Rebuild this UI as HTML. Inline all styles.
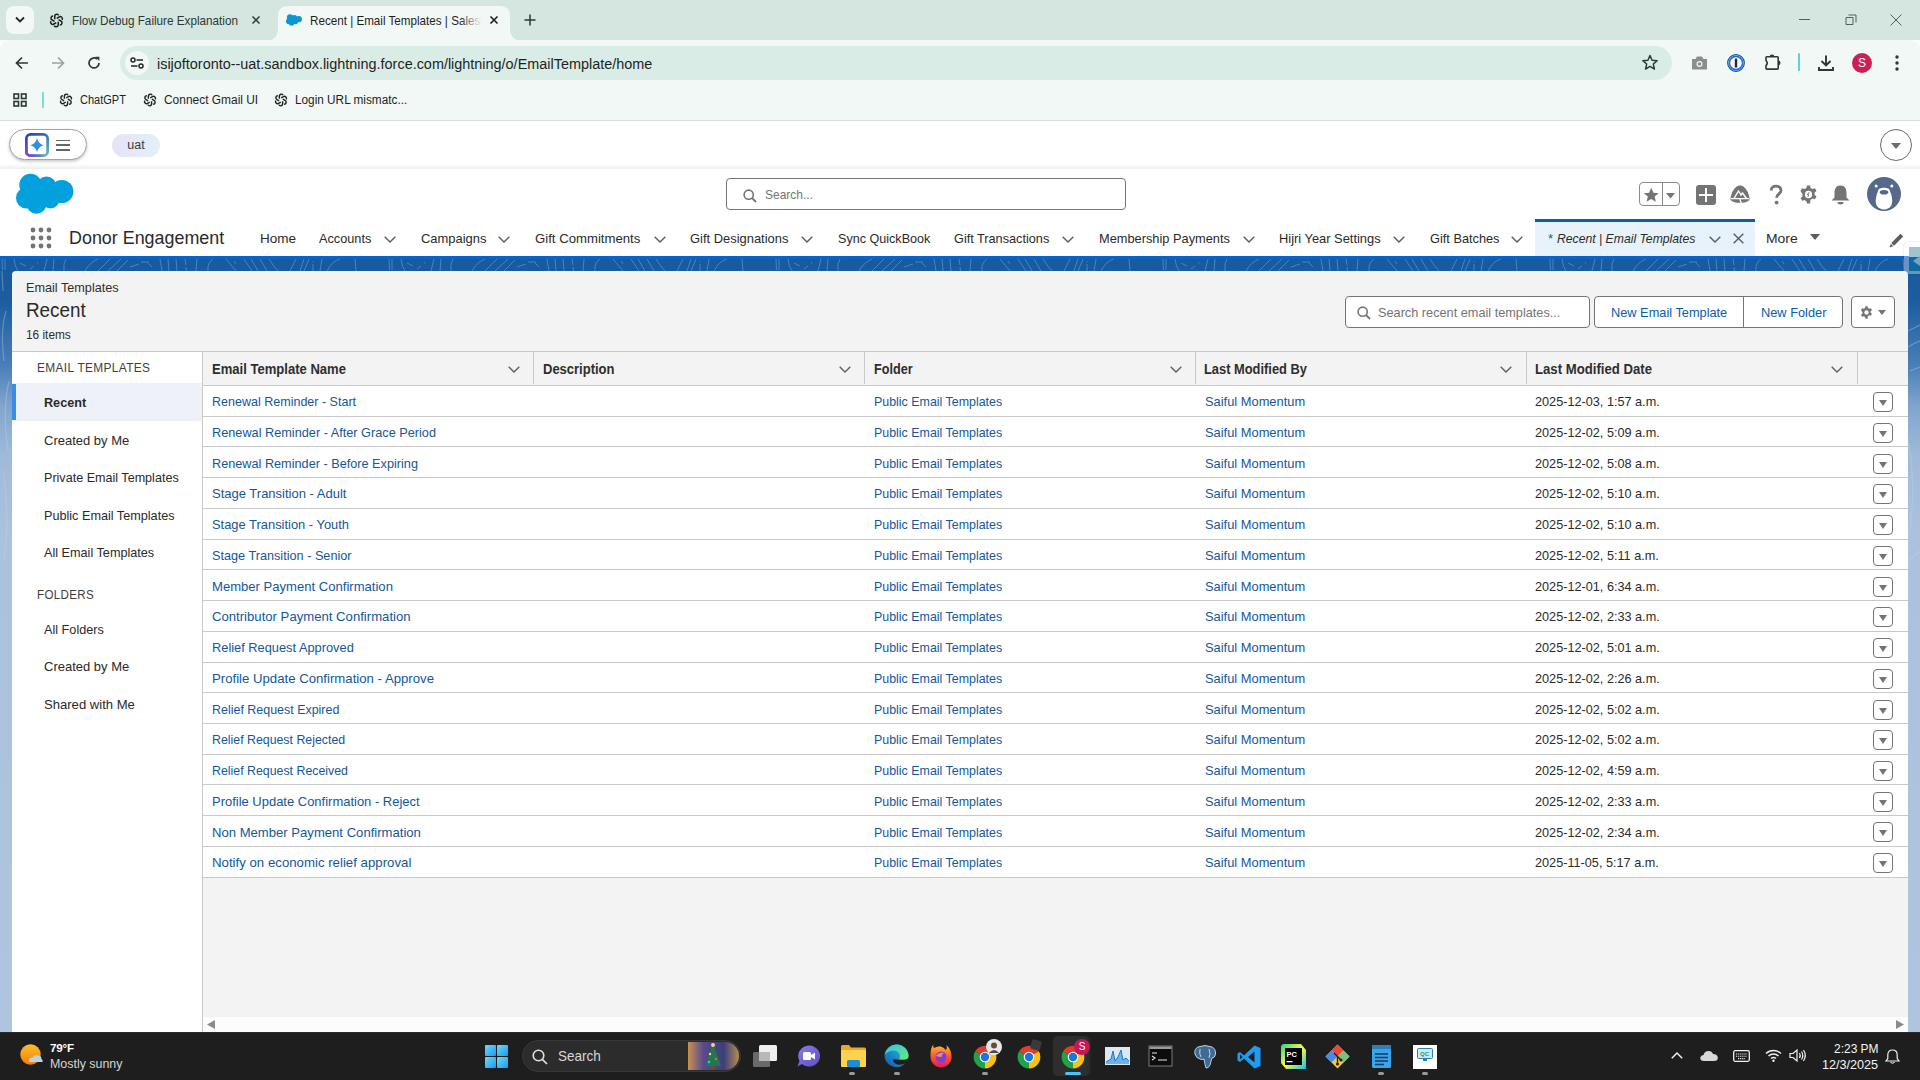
<!DOCTYPE html>
<html><head><meta charset="utf-8">
<style>
*{box-sizing:border-box}
html,body{margin:0;padding:0}
body{width:1920px;height:1080px;overflow:hidden;position:relative;font-family:"Liberation Sans",sans-serif;background:#fff;color:#181818}
.a{position:absolute}
.t{position:absolute;white-space:nowrap;line-height:1}
svg{position:absolute;overflow:visible}
</style></head><body>


<!-- ============ CHROME TAB STRIP ============ -->
<div class="a" style="left:0;top:0;width:1920px;height:40px;background:#d5e6e0"></div>
<div class="a" style="left:6px;top:6px;width:28px;height:28px;border-radius:8px;background:#f1f8f5"></div>
<svg style="left:15px;top:16px" width="10" height="8" viewBox="0 0 10 8"><path d="M1 1.5 L5 5.5 L9 1.5" fill="none" stroke="#1f2a26" stroke-width="1.8"/></svg>
<!-- inactive tab -->
<svg style="left:49px;top:13px" width="15" height="15" viewBox="0 0 24 24"><g fill="none" stroke="#1e2421" stroke-width="2.5"><path id="oa1" d="M9.2 9.9 V5.6 A3.4 3.4 0 0 1 15.6 3.8"/><use href="#oa1" transform="rotate(60 12 12)"/><use href="#oa1" transform="rotate(120 12 12)"/><use href="#oa1" transform="rotate(180 12 12)"/><use href="#oa1" transform="rotate(240 12 12)"/><use href="#oa1" transform="rotate(300 12 12)"/></g></svg>
<div class="t" style="left:72px;top:15px;font-size:12.4px;color:#2b3833;transform-origin:0 0;transform:scaleX(0.9448)">Flow Debug Failure Explanation</div>
<svg style="left:252px;top:16px" width="8" height="8" viewBox="0 0 8 8"><path d="M0.5 0.5 L7.5 7.5 M7.5 0.5 L0.5 7.5" stroke="#2b3833" stroke-width="1.5"/></svg>
<!-- active tab -->
<svg style="left:0;top:0" width="1920" height="41" viewBox="0 0 1920 41"><path d="M265 41 Q278 41 278 28 L278 16 Q278 6 288 6 L500 6 Q510 6 510 16 L510 28 Q510 41 523 41 Z" fill="#f1f8f5"/></svg>
<svg style="left:286px;top:14px" width="16" height="12" viewBox="16 173 58 42" preserveAspectRatio="none"><g fill="#0898d6"><circle cx="30.5" cy="185" r="11.2"/><circle cx="46.5" cy="186.5" r="10"/><circle cx="62.5" cy="191" r="11"/><circle cx="26.5" cy="198" r="10.5"/><circle cx="36.5" cy="203.5" r="10.2"/><circle cx="50.5" cy="199.5" r="9"/><rect x="28" y="186" width="34" height="14"/></g></svg>
<div class="a" style="left:310px;top:6px;width:172px;height:30px;overflow:hidden">
<div class="t" style="left:0;top:9px;font-size:12.4px;color:#1f1f1f;transform-origin:0 0;transform:scaleX(0.94)">Recent | Email Templates | Salesforce</div>
<div class="a" style="right:0;top:0;width:22px;height:30px;background:linear-gradient(90deg,rgba(241,248,245,0),#f1f8f5)"></div>
</div>
<svg style="left:490px;top:16px" width="8" height="8" viewBox="0 0 8 8"><path d="M0.5 0.5 L7.5 7.5 M7.5 0.5 L0.5 7.5" stroke="#1f1f1f" stroke-width="1.6"/></svg>
<svg style="left:524px;top:14px" width="12" height="12" viewBox="0 0 12 12"><path d="M6 0.5 V11.5 M0.5 6 H11.5" stroke="#2b3833" stroke-width="1.5"/></svg>
<!-- window controls -->
<div class="a" style="left:1799px;top:19px;width:11px;height:1px;background:#55605c"></div>
<svg style="left:1845px;top:14px" width="12" height="12" viewBox="0 0 12 12"><path d="M1 3.5 h7 v7 h-7 z M3.5 1 h7.5 v7.5" fill="none" stroke="#55605c" stroke-width="1"/></svg>
<svg style="left:1890px;top:14px" width="12" height="12" viewBox="0 0 12 12"><path d="M0.5 0.5 L11.5 11.5 M11.5 0.5 L0.5 11.5" stroke="#55605c" stroke-width="1"/></svg>

<!-- ============ TOOLBAR ============ -->
<div class="a" style="left:0;top:40px;width:1920px;height:80px;background:#f1f8f5;border-radius:9px 9px 0 0"></div>
<div class="a" style="left:0;top:120px;width:1920px;height:1px;background:#d7e0dc"></div>
<svg style="left:15px;top:56px" width="14" height="14" viewBox="0 0 14 14"><path d="M13 7 H2 M7 1.5 L1.5 7 L7 12.5" fill="none" stroke="#2b3833" stroke-width="1.7"/></svg>
<svg style="left:51px;top:56px" width="14" height="14" viewBox="0 0 14 14"><path d="M1 7 H12 M7 1.5 L12.5 7 L7 12.5" fill="none" stroke="#9aa3a0" stroke-width="1.7"/></svg>
<svg style="left:87px;top:56px" width="14" height="14" viewBox="0 0 14 14"><path d="M12 7 A5 5 0 1 1 10.3 3.2" fill="none" stroke="#2b3833" stroke-width="1.7"/><path d="M8.2 0.8 H12.4 V5 Z" fill="#2b3833"/></svg>
<div class="a" style="left:120px;top:46px;width:1552px;height:34px;border-radius:17px;background:#d9ede6"></div>
<div class="a" style="left:125px;top:51px;width:24px;height:24px;border-radius:12px;background:#f1f8f5"></div>
<svg style="left:130px;top:57px" width="14" height="12" viewBox="0 0 14 12"><g fill="none" stroke="#1f2a26" stroke-width="1.5"><circle cx="3" cy="3" r="2"/><path d="M6.5 3 H13"/><circle cx="11" cy="9" r="2"/><path d="M1 9 H7.5"/></g></svg>
<div class="t" style="left:157px;top:56.5px;font-size:14.35px;color:#1f1f1f;transform-origin:0 0;transform:scaleX(1.0051)">isijoftoronto--uat.sandbox.lightning.force.com/lightning/o/EmailTemplate/home</div>
<svg style="left:1641px;top:54px" width="18" height="17" viewBox="0 0 24 23"><path d="M12 2 L14.8 8.4 L21.7 9 L16.5 13.6 L18 20.4 L12 16.8 L6 20.4 L7.5 13.6 L2.3 9 L9.2 8.4 Z" fill="none" stroke="#2b3833" stroke-width="2" stroke-linejoin="round"/></svg>
<svg style="left:1691px;top:55px" width="17" height="16" viewBox="0 0 17 16"><path d="M1 4 h3.5 l1.5-2.5 h5 l1.5 2.5 h3.5 v10.5 h-15 z" fill="#8a8f8d"/><circle cx="8.5" cy="9" r="3" fill="#f1f8f5"/><circle cx="8.5" cy="9" r="1.8" fill="#8a8f8d"/></svg>
<svg style="left:1727px;top:54px" width="18" height="18" viewBox="0 0 18 18"><circle cx="9" cy="9" r="8.3" fill="#fff" stroke="#1a4a8a" stroke-width="1.2"/><circle cx="9" cy="9" r="6.6" fill="#fff" stroke="#1a6fe0" stroke-width="1.6"/><rect x="7.8" y="4.5" width="2.4" height="9" rx="0.6" fill="#1a2b4a"/></svg>
<svg style="left:1764px;top:54px" width="18" height="18" viewBox="0 0 18 18"><path d="M2.8 2.8 H13.4 Q14.2 2.8 14.2 3.6 V14.3 Q14.2 15.1 13.4 15.1 H2.8 Q2 15.1 2 14.3 V11.6 Q4.4 9 2 6.5 V3.6 Q2 2.8 2.8 2.8 Z" fill="none" stroke="#2b3833" stroke-width="1.6" stroke-linejoin="round"/><path d="M5.6 2.9 A2.4 2.4 0 0 1 10.4 2.9 Z M14.1 6.6 A2.4 2.4 0 0 1 14.1 11.4 Z" fill="#2b3833"/></svg>
<div class="a" style="left:1798px;top:53px;width:2px;height:18px;background:#5fd3d3;border-radius:1px"></div>
<svg style="left:1817px;top:54px" width="18" height="18" viewBox="0 0 18 18"><path d="M9 1.5 V11.5 M4.5 7 L9 11.5 L13.5 7 M2 13 V16 H16 V13" fill="none" stroke="#2b3833" stroke-width="1.9"/></svg>
<div class="a" style="left:1852px;top:53px;width:20px;height:20px;border-radius:10px;background:#cc1f55"></div>
<div class="t" style="left:1852px;top:57px;width:20px;text-align:center;font-size:12px;color:#fff">S</div>
<svg style="left:1895px;top:55px" width="4" height="16" viewBox="0 0 4 16"><circle cx="2" cy="2" r="1.7" fill="#2b3833"/><circle cx="2" cy="8" r="1.7" fill="#2b3833"/><circle cx="2" cy="14" r="1.7" fill="#2b3833"/></svg>

<!-- bookmarks -->
<svg style="left:13px;top:93px" width="14" height="14" viewBox="0 0 14 14"><g fill="none" stroke="#2b3833" stroke-width="1.6"><rect x="1" y="1" width="4.5" height="4.5"/><rect x="8.5" y="1" width="4.5" height="4.5"/><rect x="1" y="8.5" width="4.5" height="4.5"/><rect x="8.5" y="8.5" width="4.5" height="4.5"/></g></svg>
<div class="a" style="left:42px;top:92px;width:2px;height:16px;background:#7fdcd8"></div>
<svg style="left:59px;top:93px" width="14" height="14" viewBox="0 0 24 24"><g fill="none" stroke="#1e2421" stroke-width="2.5"><path id="oa2" d="M9.2 9.9 V5.6 A3.4 3.4 0 0 1 15.6 3.8"/><use href="#oa2" transform="rotate(60 12 12)"/><use href="#oa2" transform="rotate(120 12 12)"/><use href="#oa2" transform="rotate(180 12 12)"/><use href="#oa2" transform="rotate(240 12 12)"/><use href="#oa2" transform="rotate(300 12 12)"/></g></svg>
<div class="t" style="left:80px;top:93.5px;font-size:12px;color:#1f1f1f;transform-origin:0 0;transform:scaleX(0.9184)">ChatGPT</div>
<svg style="left:143px;top:93px" width="14" height="14" viewBox="0 0 24 24"><g fill="none" stroke="#1e2421" stroke-width="2.5"><path id="oa3" d="M9.2 9.9 V5.6 A3.4 3.4 0 0 1 15.6 3.8"/><use href="#oa3" transform="rotate(60 12 12)"/><use href="#oa3" transform="rotate(120 12 12)"/><use href="#oa3" transform="rotate(180 12 12)"/><use href="#oa3" transform="rotate(240 12 12)"/><use href="#oa3" transform="rotate(300 12 12)"/></g></svg>
<div class="t" style="left:164px;top:93.5px;font-size:12px;color:#1f1f1f;transform-origin:0 0;transform:scaleX(0.9946)">Connect Gmail UI</div>
<svg style="left:274px;top:93px" width="14" height="14" viewBox="0 0 24 24"><g fill="none" stroke="#1e2421" stroke-width="2.5"><path id="oa4" d="M9.2 9.9 V5.6 A3.4 3.4 0 0 1 15.6 3.8"/><use href="#oa4" transform="rotate(60 12 12)"/><use href="#oa4" transform="rotate(120 12 12)"/><use href="#oa4" transform="rotate(180 12 12)"/><use href="#oa4" transform="rotate(240 12 12)"/><use href="#oa4" transform="rotate(300 12 12)"/></g></svg>
<div class="t" style="left:295px;top:93.5px;font-size:12px;color:#1f1f1f;transform-origin:0 0;transform:scaleX(0.9821)">Login URL mismatc...</div>

<!-- ============ SANDBOX BAR ============ -->
<div class="a" style="left:0;top:121px;width:1920px;height:48px;background:#fff"></div>
<div class="a" style="left:0;top:164px;width:1920px;height:5px;background:linear-gradient(180deg,rgba(0,0,0,0),rgba(0,0,0,0.065))"></div>
<div class="a" style="left:9px;top:129px;width:78px;height:31px;border-radius:16px;background:#fff;border:1px solid #a3a3a3;box-shadow:0 1.5px 3px rgba(0,0,0,0.22)"></div>
<svg style="left:25px;top:133px" width="24" height="24" viewBox="0 0 24 24"><defs><linearGradient id="ein1" x1="0" y1="0" x2="1" y2="1"><stop offset="0" stop-color="#233ad0"/><stop offset="0.5" stop-color="#3b6ec8"/><stop offset="1" stop-color="#62bdb0"/></linearGradient><radialGradient id="ein2" cx="0" cy="1" r="0.9"><stop offset="0" stop-color="#8a3ed8" stop-opacity="1"/><stop offset="1" stop-color="#8a3ed8" stop-opacity="0"/></radialGradient></defs><rect x="1.35" y="1.35" width="21.3" height="21.3" rx="4.2" fill="none" stroke="url(#ein1)" stroke-width="2.7"/><rect x="1.35" y="1.35" width="21.3" height="21.3" rx="4.2" fill="none" stroke="url(#ein2)" stroke-width="2.7"/><path d="M12 5 Q13.2 10.6 18.6 12.2 Q13.2 13.6 12 19.3 Q10.8 13.6 5.4 12.2 Q10.8 10.6 12 5Z" fill="#2f8ee0"/></svg>
<div class="a" style="left:56px;top:139.5px;width:14px;height:1.6px;background:#666"></div>
<div class="a" style="left:56px;top:144.2px;width:14px;height:1.6px;background:#666"></div>
<div class="a" style="left:56px;top:149px;width:14px;height:1.6px;background:#666"></div>
<div class="a" style="left:112px;top:134px;width:48px;height:23px;border-radius:12px;background:linear-gradient(90deg,#e6e3f7,#e3f0f8)"></div>
<div class="t" style="left:112px;top:139px;width:48px;text-align:center;font-size:12.5px;color:#3a3a3a">uat</div>
<div class="a" style="left:1880px;top:129px;width:32px;height:32px;border-radius:16px;border:1px solid #6b6b6b;background:#fff"></div>
<svg style="left:1891px;top:143px" width="10" height="6" viewBox="0 0 10 6"><path d="M0 0 H10 L5 6 Z" fill="#6b6b6b"/></svg>

<!-- ============ SF GLOBAL HEADER ============ -->
<svg style="left:16px;top:173px" width="58" height="42" viewBox="16 173 58 42"><g fill="#02a0dc"><circle cx="30.5" cy="185" r="11.2"/><circle cx="46.5" cy="186.5" r="10"/><circle cx="61.8" cy="191.5" r="11.6"/><circle cx="26.5" cy="198" r="10.5"/><circle cx="36.5" cy="203.5" r="10.2"/><circle cx="50.5" cy="199.5" r="9"/><rect x="28" y="186" width="34" height="14"/></g></svg>
<div class="a" style="left:726px;top:178px;width:400px;height:32px;border:1px solid #747474;border-radius:4px;background:#fff"></div>
<svg style="left:743px;top:189px" width="14" height="14" viewBox="0 0 14 14"><circle cx="5.7" cy="5.7" r="4.6" fill="none" stroke="#747474" stroke-width="1.6"/><path d="M9 9 L13 13" stroke="#747474" stroke-width="1.8"/></svg>
<div class="t" style="left:765px;top:188px;font-size:13px;color:#747474;transform-origin:0 0;transform:scaleX(0.9200)">Search...</div>
<!-- favorites -->
<div class="a" style="left:1639px;top:182px;width:41px;height:24px;border:1px solid #8a8a8a;border-radius:4px;background:#fff"></div>
<div class="a" style="left:1662px;top:183px;width:1px;height:22px;background:#8a8a8a"></div>
<svg style="left:1642.5px;top:187px" width="16.5" height="16" viewBox="0 0 24 24"><path d="M12 1 L15.2 8.6 L23.2 9.2 L17.1 14.4 L19 22.2 L12 18 L5 22.2 L6.9 14.4 L0.8 9.2 L8.8 8.6 Z" fill="#747474"/></svg>
<svg style="left:1666px;top:193px" width="9" height="6" viewBox="0 0 9 6"><path d="M0 0 H9 L4.5 5.5 Z" fill="#747474"/></svg>
<!-- plus -->
<div class="a" style="left:1696px;top:185px;width:20px;height:20px;border-radius:3px;background:#747474"></div>
<div class="a" style="left:1705px;top:188px;width:2px;height:14px;background:#fff"></div>
<div class="a" style="left:1699px;top:194px;width:14px;height:2px;background:#fff"></div>
<!-- trailhead -->
<svg style="left:1730px;top:185px" width="20" height="20" viewBox="0 0 20 20"><path d="M10 0.5 C15 0.5 19.5 8 19.5 15 C16 18.8 4 18.8 0.5 15 C0.5 8 5 0.5 10 0.5Z" fill="#747474"/><path d="M4 13.5 L8.5 6 L11 10 L12.5 8 L16.5 13.5" fill="none" stroke="#fff" stroke-width="1.4"/><path d="M1 13.6 H19 M9.5 13.6 L11.5 18.5" stroke="#fff" stroke-width="1.3"/></svg>
<!-- help -->
<svg style="left:1769px;top:185px" width="14" height="20" viewBox="0 0 14 20"><path d="M2.2 5.4 C2.2 2.6 4.2 1.2 7 1.2 C10 1.2 12 2.9 12 5.4 C12 8.8 7.6 9 7.6 12.8" fill="none" stroke="#747474" stroke-width="2.8"/><circle cx="7.6" cy="17.6" r="1.9" fill="#747474"/></svg>
<!-- gear -->
<svg style="left:1799px;top:185px" width="19" height="19" viewBox="0 0 24 24"><path d="M10 0.5 h4 l0.6 3.2 a8.5 8.5 0 0 1 2.4 1.4 l3.1-1.1 2 3.5 -2.5 2.1 a8.5 8.5 0 0 1 0 2.8 l2.5 2.1 -2 3.5 -3.1-1.1 a8.5 8.5 0 0 1-2.4 1.4 L14 23.5 h-4 l-0.6-3.2 a8.5 8.5 0 0 1-2.4-1.4 l-3.1 1.1 -2-3.5 2.5-2.1 a8.5 8.5 0 0 1 0-2.8 L1.9 7.5 l2-3.5 3.1 1.1 A8.5 8.5 0 0 1 9.4 3.7 Z" fill="#747474"/><circle cx="12" cy="12" r="4.6" fill="#fff"/><path d="M12.8 9 L10.6 12.4 H12.4 L11.2 15" fill="none" stroke="#747474" stroke-width="1.2"/></svg>
<!-- bell -->
<svg style="left:1831px;top:185px" width="19" height="20" viewBox="0 0 19 20"><path d="M9.5 0.5 C14 0.5 15.5 4 15.5 8 V12.5 L18.5 15.5 H0.5 L3.5 12.5 V8 C3.5 4 5 0.5 9.5 0.5Z" fill="#747474"/><path d="M6.5 17 H12.5 A3 2.5 0 0 1 6.5 17Z" fill="#747474"/></svg>
<!-- avatar -->
<svg style="left:1867px;top:177px" width="34" height="34" viewBox="0 0 34 34"><circle cx="17" cy="17" r="17" fill="#56698c"/><path d="M11 14 C11 9.5 23 9.5 23 14 C25.5 20 26 26 24 29 C21 33.5 13 33.5 10 29 C8 26 8.5 20 11 14 Z" fill="#fff"/><circle cx="9.2" cy="9" r="1.5" fill="#fff"/><circle cx="24.8" cy="9" r="1.5" fill="#fff"/><ellipse cx="17" cy="15.2" rx="4.2" ry="2.3" fill="#56698c"/></svg>

<!-- ============ NAV BAR ============ -->
<svg style="left:30px;top:227px" width="22" height="22" viewBox="0 0 22 22"><g fill="#747474"><circle cx="3" cy="3" r="2.4"/><circle cx="11" cy="3" r="2.4"/><circle cx="19" cy="3" r="2.4"/><circle cx="3" cy="11" r="2.4"/><circle cx="11" cy="11" r="2.4"/><circle cx="19" cy="11" r="2.4"/><circle cx="3" cy="19" r="2.4"/><circle cx="11" cy="19" r="2.4"/><circle cx="19" cy="19" r="2.4"/></g></svg>
<div class="t" style="left:69px;top:230px;font-size:17.8px;color:#2a2a2a;transform-origin:0 0;transform:scaleX(1.0065)">Donor Engagement</div>
<div class="t" style="left:259.7px;top:232px;font-size:13px;color:#2a2a2a;transform-origin:0 0;transform:scaleX(1.0394)">Home</div>
<div class="t" style="left:318.7px;top:232px;font-size:13px;color:#2a2a2a;transform-origin:0 0;transform:scaleX(0.9774)">Accounts</div>
<svg style="left:384px;top:236px" width="12" height="7" viewBox="0 0 12 7"><path d="M0.7 0.7 L6 6 L11.3 0.7" fill="none" stroke="#5c5c5c" stroke-width="1.4"/></svg>
<div class="t" style="left:420.8px;top:232px;font-size:13px;color:#2a2a2a;transform-origin:0 0;transform:scaleX(0.9953)">Campaigns</div>
<svg style="left:498px;top:236px" width="12" height="7" viewBox="0 0 12 7"><path d="M0.7 0.7 L6 6 L11.3 0.7" fill="none" stroke="#5c5c5c" stroke-width="1.4"/></svg>
<div class="t" style="left:535px;top:232px;font-size:13px;color:#2a2a2a;transform-origin:0 0;transform:scaleX(1.0126)">Gift Commitments</div>
<svg style="left:653.6px;top:236px" width="12" height="7" viewBox="0 0 12 7"><path d="M0.7 0.7 L6 6 L11.3 0.7" fill="none" stroke="#5c5c5c" stroke-width="1.4"/></svg>
<div class="t" style="left:690px;top:232px;font-size:13px;color:#2a2a2a;transform-origin:0 0;transform:scaleX(0.9939)">Gift Designations</div>
<svg style="left:801px;top:236px" width="12" height="7" viewBox="0 0 12 7"><path d="M0.7 0.7 L6 6 L11.3 0.7" fill="none" stroke="#5c5c5c" stroke-width="1.4"/></svg>
<div class="t" style="left:838px;top:232px;font-size:13px;color:#2a2a2a;transform-origin:0 0;transform:scaleX(0.9681)">Sync QuickBook</div>
<div class="t" style="left:953.7px;top:232px;font-size:13px;color:#2a2a2a;transform-origin:0 0;transform:scaleX(0.9766)">Gift Transactions</div>
<svg style="left:1061.7px;top:236px" width="12" height="7" viewBox="0 0 12 7"><path d="M0.7 0.7 L6 6 L11.3 0.7" fill="none" stroke="#5c5c5c" stroke-width="1.4"/></svg>
<div class="t" style="left:1098.7px;top:232px;font-size:13px;color:#2a2a2a;transform-origin:0 0;transform:scaleX(0.9848)">Membership Payments</div>
<svg style="left:1242.5px;top:236px" width="12" height="7" viewBox="0 0 12 7"><path d="M0.7 0.7 L6 6 L11.3 0.7" fill="none" stroke="#5c5c5c" stroke-width="1.4"/></svg>
<div class="t" style="left:1279px;top:232px;font-size:13px;color:#2a2a2a;transform-origin:0 0;transform:scaleX(0.9901)">Hijri Year Settings</div>
<svg style="left:1392.5px;top:236px" width="12" height="7" viewBox="0 0 12 7"><path d="M0.7 0.7 L6 6 L11.3 0.7" fill="none" stroke="#5c5c5c" stroke-width="1.4"/></svg>
<div class="t" style="left:1429.8px;top:232px;font-size:13px;color:#2a2a2a;transform-origin:0 0;transform:scaleX(0.9812)">Gift Batches</div>
<svg style="left:1511px;top:236px" width="12" height="7" viewBox="0 0 12 7"><path d="M0.7 0.7 L6 6 L11.3 0.7" fill="none" stroke="#5c5c5c" stroke-width="1.4"/></svg>

<!-- active tab -->
<div class="a" style="left:1535px;top:219px;width:220px;height:37px;background:#e8f2fb;border-top:3px solid #0b5cab"></div>
<div class="t" style="left:1548px;top:232px;font-size:13px;color:#0b5cab">*</div>
<div class="t" style="left:1557px;top:232px;font-size:13px;font-style:italic;color:#2a2a2a;transform-origin:0 0;transform:scaleX(0.9388)">Recent | Email Templates</div>
<svg style="left:1709px;top:236px" width="12" height="7" viewBox="0 0 12 7"><path d="M0.7 0.7 L6 6 L11.3 0.7" fill="none" stroke="#5c5c5c" stroke-width="1.4"/></svg>
<svg style="left:1733px;top:233px" width="11" height="11" viewBox="0 0 11 11"><path d="M0.7 0.7 L10.3 10.3 M10.3 0.7 L0.7 10.3" stroke="#5c5c5c" stroke-width="1.4"/></svg>
<div class="t" style="left:1766px;top:232px;font-size:13px;color:#2a2a2a;transform-origin:0 0;transform:scaleX(1.0714)">More</div>
<svg style="left:1810px;top:234px" width="10" height="6" viewBox="0 0 10 6"><path d="M0 0 H10 L5 6 Z" fill="#5c5c5c"/></svg>
<svg style="left:1889px;top:233px" width="15" height="15" viewBox="0 0 15 15"><path d="M11.5 0.8 L14.2 3.5 L5 12.7 L2.3 10 Z" fill="#5c5c5c"/><path d="M1.8 10.8 L4.2 13.2 L0.5 14.5 Z" fill="#5c5c5c"/></svg>

<!-- ============ BLUE BAND ============ -->
<div class="a" style="left:0;top:256px;width:1920px;height:776px;background:linear-gradient(180deg,#0b63c6 0px,#0b63c6 3px,#175a9e 3px,#1c5d9f 45px,#4a7fb8 110px,#80a5cd 150px,#a0bad9 200px,#abc2de 280px,#aec4df 776px)"></div>
<svg style="left:0;top:259px" width="1920" height="12" viewBox="0 0 1920 12"><defs><pattern id="bandpat" x="0" y="0" width="387" height="12" patternUnits="userSpaceOnUse"><path d="M2 0 L2.5 11 M5 0 L5 11 M14 0 Q15 8 18 12 M20 4 L26 7 M30 10 L34 7 M37 3 L38 4.5 M44 12 L47 0 M53 12 L54 0 M64 12 Q63 4 66 0 M85 12 Q90 3 98 0 M98 12 L110 0 M108 12 L121 0 M117 12 L128 1 M130 8 L139 5 M141 3 L149 3 M148 4 L152 8 M160 0 L162 12 M168 0 L169 12 M176 0 L177 12 M185 0 L186 6 M186 8 L186.5 12 M196 12 L197 0 M208 12 Q207 4 213 0 M226 0 L236 12 M234 2 L236 5 M244 0 L252 12 M251 0 L258 12 M260 0 L267 12 M269 0 Q274 8 278 12 M290 12 L296 0 M300 12 L304 0 M304 12 L309 0 M313 5 L313 12 M313 2 L313 3 M320 12 L322 0 M327 12 Q332 2 340 0 M355 0 L356 12" fill="none" stroke="#5a90c6" stroke-width="1" stroke-opacity="0.75"/></pattern></defs><rect x="0" y="0" width="1920" height="12" fill="url(#bandpat)"/></svg>
<svg style="left:0;top:271px" width="12" height="300" viewBox="0 0 12 300"><g fill="none" stroke="rgba(190,215,240,0.35)" stroke-width="1.2"><path d="M2 0 L3 20 M6 40 Q0 60 4 90 M9 110 Q2 140 8 180 M3 200 Q10 240 4 290"/></g></svg>
<svg style="left:1908px;top:271px" width="12" height="300" viewBox="0 0 12 300"><g fill="none" stroke="rgba(190,215,240,0.35)" stroke-width="1.2"><path d="M0 60 L12 54 M0 76 Q6 72 12 70 M2 100 L12 96 M0 170 Q8 210 2 260 M0 290 L12 280"/></g></svg>
<!-- docked utility -->
<div class="a" style="left:1904px;top:242px;width:20px;height:32px;border-radius:5px;background:rgba(255,255,255,0.35);box-shadow:0 0 2px rgba(0,0,0,0.2)"></div>
<div class="a" style="left:1909px;top:247px;width:11px;height:24px;background:linear-gradient(180deg,#9fc4cc 0,#9fc4cc 40%,#0e6aa8 40%,#106a9e 100%)"></div>
<svg style="left:1913px;top:256px" width="7" height="10" viewBox="0 0 7 10"><path d="M7 0 V10 L0 5 Z" fill="#7aa3c8"/></svg>

<!-- ============ PANEL ============ -->
<div class="a" style="left:12px;top:271px;width:1896px;height:761px;background:#f3f3f3;border-radius:4px 4px 0 0"></div>
<div class="t" style="left:25.5px;top:282px;font-size:12.6px;color:#2e2e2e;transform-origin:0 0;transform:scaleX(1.0055)">Email Templates</div>
<div class="t" style="left:25.5px;top:301px;font-size:19.5px;color:#2a2a2a;transform-origin:0 0;transform:scaleX(0.9667)">Recent</div>
<div class="t" style="left:25.5px;top:328.5px;font-size:12.4px;color:#2e2e2e;transform-origin:0 0;transform:scaleX(0.9565)">16 items</div>
<!-- search recent -->
<div class="a" style="left:1345px;top:296px;width:245px;height:32px;border:1px solid #747474;border-radius:4px;background:#fff"></div>
<svg style="left:1357px;top:306px" width="14" height="14" viewBox="0 0 14 14"><circle cx="5.7" cy="5.7" r="4.6" fill="none" stroke="#747474" stroke-width="1.6"/><path d="M9 9 L13 13" stroke="#747474" stroke-width="1.8"/></svg>
<div class="t" style="left:1378px;top:306px;font-size:13px;color:#747474;transform-origin:0 0;transform:scaleX(0.9783)">Search recent email templates...</div>
<!-- button group -->
<div class="a" style="left:1594px;top:296px;width:249px;height:32px;border:1px solid #747474;border-radius:4px;background:#fff"></div>
<div class="a" style="left:1743px;top:297px;width:1px;height:30px;background:#747474"></div>
<div class="t" style="left:1611px;top:306px;font-size:13px;color:#0b5cab;transform-origin:0 0;transform:scaleX(0.9829)">New Email Template</div>
<div class="t" style="left:1761px;top:306px;font-size:13px;color:#0b5cab;transform-origin:0 0;transform:scaleX(0.9848)">New Folder</div>
<div class="a" style="left:1851px;top:296px;width:44px;height:32px;border:1px solid #747474;border-radius:4px;background:#fff"></div>
<svg style="left:1860px;top:306px" width="13" height="13" viewBox="0 0 24 24"><path d="M10 0.5 h4 l0.6 3.2 a8.5 8.5 0 0 1 2.4 1.4 l3.1-1.1 2 3.5 -2.5 2.1 a8.5 8.5 0 0 1 0 2.8 l2.5 2.1 -2 3.5 -3.1-1.1 a8.5 8.5 0 0 1-2.4 1.4 L14 23.5 h-4 l-0.6-3.2 a8.5 8.5 0 0 1-2.4-1.4 l-3.1 1.1 -2-3.5 2.5-2.1 a8.5 8.5 0 0 1 0-2.8 L1.9 7.5 l2-3.5 3.1 1.1 A8.5 8.5 0 0 1 9.4 3.7 Z" fill="#747474"/><circle cx="12" cy="12" r="4" fill="#fff"/></svg>
<svg style="left:1878px;top:310px" width="8" height="5" viewBox="0 0 8 5"><path d="M0 0 H8 L4 5 Z" fill="#747474"/></svg>

<!-- ============ SIDEBAR ============ -->
<div class="a" style="left:12px;top:351px;width:1896px;height:1px;background:#c9c9c9"></div>
<div class="a" style="left:12px;top:352px;width:190px;height:680px;background:#fff"></div>
<div class="a" style="left:202px;top:352px;width:1px;height:680px;background:#c9c9c9"></div>
<div class="t" style="left:36.5px;top:362px;font-size:12px;letter-spacing:0.35px;color:#3e3e3e;transform-origin:0 0;transform:scaleX(0.9903)">EMAIL TEMPLATES</div>
<div class="a" style="left:12px;top:383px;width:190px;height:38px;background:#eef1f8"></div>
<div class="a" style="left:12px;top:384px;width:4px;height:36px;background:#3a8ce8"></div>
<div class="t" style="left:44px;top:395.8px;font-size:13px;font-weight:bold;color:#2a2a2a;;transform-origin:0 0;transform:scaleX(0.9714)">Recent</div>
<div class="t" style="left:44px;top:433.8px;font-size:13px;color:#2a2a2a;;transform-origin:0 0;transform:scaleX(1.0000)">Created by Me</div>
<div class="t" style="left:44px;top:471.4px;font-size:13px;color:#2a2a2a;;transform-origin:0 0;transform:scaleX(0.9674)">Private Email Templates</div>
<div class="t" style="left:44px;top:508.7px;font-size:13px;color:#2a2a2a;;transform-origin:0 0;transform:scaleX(0.9729)">Public Email Templates</div>
<div class="t" style="left:44px;top:546.0px;font-size:13px;color:#2a2a2a;;transform-origin:0 0;transform:scaleX(0.9735)">All Email Templates</div>
<div class="t" style="left:44px;top:622.8px;font-size:13px;color:#2a2a2a;;transform-origin:0 0;transform:scaleX(0.9754)">All Folders</div>
<div class="t" style="left:44px;top:660.0px;font-size:13px;color:#2a2a2a;;transform-origin:0 0;transform:scaleX(1.0000)">Created by Me</div>
<div class="t" style="left:44px;top:697.7px;font-size:13px;color:#2a2a2a;;transform-origin:0 0;transform:scaleX(1.0056)">Shared with Me</div>

<div class="t" style="left:36.5px;top:589px;font-size:12px;letter-spacing:0.35px;color:#3e3e3e;transform-origin:0 0;transform:scaleX(0.9649)">FOLDERS</div>

<!-- ============ TABLE ============ -->
<div class="a" style="left:203px;top:352px;width:1705px;height:33px;background:#f3f3f3"></div>
<div class="a" style="left:203px;top:385px;width:1705px;height:1px;background:#c9c9c9"></div>
<div class="t" style="left:212.0px;top:362px;font-size:14px;font-weight:bold;color:#2e2e2e;transform-origin:0 0;transform:scaleX(0.9324)">Email Template Name</div>
<svg style="left:508.0px;top:366px" width="12" height="7" viewBox="0 0 12 7"><path d="M0.7 0.7 L6 6 L11.3 0.7" fill="none" stroke="#5c5c5c" stroke-width="1.3"/></svg>
<div class="a" style="left:533.3px;top:352px;width:1px;height:32px;background:#c9c9c9"></div>
<div class="t" style="left:542.8px;top:362px;font-size:14px;font-weight:bold;color:#2e2e2e;transform-origin:0 0;transform:scaleX(0.9280)">Description</div>
<svg style="left:838.8px;top:366px" width="12" height="7" viewBox="0 0 12 7"><path d="M0.7 0.7 L6 6 L11.3 0.7" fill="none" stroke="#5c5c5c" stroke-width="1.3"/></svg>
<div class="a" style="left:864.1px;top:352px;width:1px;height:32px;background:#c9c9c9"></div>
<div class="t" style="left:873.6px;top:362px;font-size:14px;font-weight:bold;color:#2e2e2e;transform-origin:0 0;transform:scaleX(0.9036)">Folder</div>
<svg style="left:1169.6px;top:366px" width="12" height="7" viewBox="0 0 12 7"><path d="M0.7 0.7 L6 6 L11.3 0.7" fill="none" stroke="#5c5c5c" stroke-width="1.3"/></svg>
<div class="a" style="left:1194.9px;top:352px;width:1px;height:32px;background:#c9c9c9"></div>
<div class="t" style="left:1204.4px;top:362px;font-size:14px;font-weight:bold;color:#2e2e2e;transform-origin:0 0;transform:scaleX(0.9189)">Last Modified By</div>
<svg style="left:1500.4px;top:366px" width="12" height="7" viewBox="0 0 12 7"><path d="M0.7 0.7 L6 6 L11.3 0.7" fill="none" stroke="#5c5c5c" stroke-width="1.3"/></svg>
<div class="a" style="left:1525.7px;top:352px;width:1px;height:32px;background:#c9c9c9"></div>
<div class="t" style="left:1535.2px;top:362px;font-size:14px;font-weight:bold;color:#2e2e2e;transform-origin:0 0;transform:scaleX(0.9398)">Last Modified Date</div>
<svg style="left:1831.2px;top:366px" width="12" height="7" viewBox="0 0 12 7"><path d="M0.7 0.7 L6 6 L11.3 0.7" fill="none" stroke="#5c5c5c" stroke-width="1.3"/></svg>
<div class="a" style="left:1856.5px;top:352px;width:1px;height:32px;background:#c9c9c9"></div>

<div class="a" style="left:203px;top:386px;width:1705px;height:492px;background:#fff"></div>
<div class="a" style="left:203px;top:416px;width:1705px;height:1px;background:#c9c9c9"></div>
<div class="t" style="left:212px;top:395.30px;font-size:13px;color:#14579a;transform-origin:0 0;transform:scaleX(0.9631)">Renewal Reminder - Start</div>
<div class="t" style="left:873.7px;top:395.30px;font-size:13px;color:#14579a;transform-origin:0 0;transform:scaleX(0.955)">Public Email Templates</div>
<div class="t" style="left:1204.5px;top:395.30px;font-size:13px;color:#14579a;transform-origin:0 0;transform:scaleX(0.99)">Saiful Momentum</div>
<div class="t" style="left:1535.3px;top:395.30px;font-size:13px;color:#2a2a2a;transform-origin:0 0;transform:scaleX(0.975)">2025-12-03, 1:57 a.m.</div>
<div class="a" style="left:1873px;top:392px;width:20px;height:20px;border:1px solid #747474;border-radius:4px;background:#fff"></div>
<svg style="left:1879px;top:400px" width="8" height="6" viewBox="0 0 8 6"><path d="M0 0 H8 L4 6 Z" fill="#747474"/></svg>
<div class="a" style="left:203px;top:446px;width:1705px;height:1px;background:#c9c9c9"></div>
<div class="t" style="left:212px;top:426.03px;font-size:13px;color:#14579a;transform-origin:0 0;transform:scaleX(0.9780)">Renewal Reminder - After Grace Period</div>
<div class="t" style="left:873.7px;top:426.03px;font-size:13px;color:#14579a;transform-origin:0 0;transform:scaleX(0.955)">Public Email Templates</div>
<div class="t" style="left:1204.5px;top:426.03px;font-size:13px;color:#14579a;transform-origin:0 0;transform:scaleX(0.99)">Saiful Momentum</div>
<div class="t" style="left:1535.3px;top:426.03px;font-size:13px;color:#2a2a2a;transform-origin:0 0;transform:scaleX(0.975)">2025-12-02, 5:09 a.m.</div>
<div class="a" style="left:1873px;top:423px;width:20px;height:20px;border:1px solid #747474;border-radius:4px;background:#fff"></div>
<svg style="left:1879px;top:431px" width="8" height="6" viewBox="0 0 8 6"><path d="M0 0 H8 L4 6 Z" fill="#747474"/></svg>
<div class="a" style="left:203px;top:477px;width:1705px;height:1px;background:#c9c9c9"></div>
<div class="t" style="left:212px;top:456.76px;font-size:13px;color:#14579a;transform-origin:0 0;transform:scaleX(0.9761)">Renewal Reminder - Before Expiring</div>
<div class="t" style="left:873.7px;top:456.76px;font-size:13px;color:#14579a;transform-origin:0 0;transform:scaleX(0.955)">Public Email Templates</div>
<div class="t" style="left:1204.5px;top:456.76px;font-size:13px;color:#14579a;transform-origin:0 0;transform:scaleX(0.99)">Saiful Momentum</div>
<div class="t" style="left:1535.3px;top:456.76px;font-size:13px;color:#2a2a2a;transform-origin:0 0;transform:scaleX(0.975)">2025-12-02, 5:08 a.m.</div>
<div class="a" style="left:1873px;top:454px;width:20px;height:20px;border:1px solid #747474;border-radius:4px;background:#fff"></div>
<svg style="left:1879px;top:462px" width="8" height="6" viewBox="0 0 8 6"><path d="M0 0 H8 L4 6 Z" fill="#747474"/></svg>
<div class="a" style="left:203px;top:508px;width:1705px;height:1px;background:#c9c9c9"></div>
<div class="t" style="left:212px;top:487.49px;font-size:13px;color:#14579a;transform-origin:0 0;transform:scaleX(1.0000)">Stage Transition - Adult</div>
<div class="t" style="left:873.7px;top:487.49px;font-size:13px;color:#14579a;transform-origin:0 0;transform:scaleX(0.955)">Public Email Templates</div>
<div class="t" style="left:1204.5px;top:487.49px;font-size:13px;color:#14579a;transform-origin:0 0;transform:scaleX(0.99)">Saiful Momentum</div>
<div class="t" style="left:1535.3px;top:487.49px;font-size:13px;color:#2a2a2a;transform-origin:0 0;transform:scaleX(0.975)">2025-12-02, 5:10 a.m.</div>
<div class="a" style="left:1873px;top:484px;width:20px;height:20px;border:1px solid #747474;border-radius:4px;background:#fff"></div>
<svg style="left:1879px;top:492px" width="8" height="6" viewBox="0 0 8 6"><path d="M0 0 H8 L4 6 Z" fill="#747474"/></svg>
<div class="a" style="left:203px;top:539px;width:1705px;height:1px;background:#c9c9c9"></div>
<div class="t" style="left:212px;top:518.22px;font-size:13px;color:#14579a;transform-origin:0 0;transform:scaleX(0.9926)">Stage Transition - Youth</div>
<div class="t" style="left:873.7px;top:518.22px;font-size:13px;color:#14579a;transform-origin:0 0;transform:scaleX(0.955)">Public Email Templates</div>
<div class="t" style="left:1204.5px;top:518.22px;font-size:13px;color:#14579a;transform-origin:0 0;transform:scaleX(0.99)">Saiful Momentum</div>
<div class="t" style="left:1535.3px;top:518.22px;font-size:13px;color:#2a2a2a;transform-origin:0 0;transform:scaleX(0.975)">2025-12-02, 5:10 a.m.</div>
<div class="a" style="left:1873px;top:515px;width:20px;height:20px;border:1px solid #747474;border-radius:4px;background:#fff"></div>
<svg style="left:1879px;top:523px" width="8" height="6" viewBox="0 0 8 6"><path d="M0 0 H8 L4 6 Z" fill="#747474"/></svg>
<div class="a" style="left:203px;top:569px;width:1705px;height:1px;background:#c9c9c9"></div>
<div class="t" style="left:212px;top:548.95px;font-size:13px;color:#14579a;transform-origin:0 0;transform:scaleX(0.9754)">Stage Transition - Senior</div>
<div class="t" style="left:873.7px;top:548.95px;font-size:13px;color:#14579a;transform-origin:0 0;transform:scaleX(0.955)">Public Email Templates</div>
<div class="t" style="left:1204.5px;top:548.95px;font-size:13px;color:#14579a;transform-origin:0 0;transform:scaleX(0.99)">Saiful Momentum</div>
<div class="t" style="left:1535.3px;top:548.95px;font-size:13px;color:#2a2a2a;transform-origin:0 0;transform:scaleX(0.975)">2025-12-02, 5:11 a.m.</div>
<div class="a" style="left:1873px;top:546px;width:20px;height:20px;border:1px solid #747474;border-radius:4px;background:#fff"></div>
<svg style="left:1879px;top:554px" width="8" height="6" viewBox="0 0 8 6"><path d="M0 0 H8 L4 6 Z" fill="#747474"/></svg>
<div class="a" style="left:203px;top:600px;width:1705px;height:1px;background:#c9c9c9"></div>
<div class="t" style="left:212px;top:579.68px;font-size:13px;color:#14579a;transform-origin:0 0;transform:scaleX(1.0056)">Member Payment Confirmation</div>
<div class="t" style="left:873.7px;top:579.68px;font-size:13px;color:#14579a;transform-origin:0 0;transform:scaleX(0.955)">Public Email Templates</div>
<div class="t" style="left:1204.5px;top:579.68px;font-size:13px;color:#14579a;transform-origin:0 0;transform:scaleX(0.99)">Saiful Momentum</div>
<div class="t" style="left:1535.3px;top:579.68px;font-size:13px;color:#2a2a2a;transform-origin:0 0;transform:scaleX(0.975)">2025-12-01, 6:34 a.m.</div>
<div class="a" style="left:1873px;top:577px;width:20px;height:20px;border:1px solid #747474;border-radius:4px;background:#fff"></div>
<svg style="left:1879px;top:585px" width="8" height="6" viewBox="0 0 8 6"><path d="M0 0 H8 L4 6 Z" fill="#747474"/></svg>
<div class="a" style="left:203px;top:631px;width:1705px;height:1px;background:#c9c9c9"></div>
<div class="t" style="left:212px;top:610.41px;font-size:13px;color:#14579a;transform-origin:0 0;transform:scaleX(1.0103)">Contributor Payment Confirmation</div>
<div class="t" style="left:873.7px;top:610.41px;font-size:13px;color:#14579a;transform-origin:0 0;transform:scaleX(0.955)">Public Email Templates</div>
<div class="t" style="left:1204.5px;top:610.41px;font-size:13px;color:#14579a;transform-origin:0 0;transform:scaleX(0.99)">Saiful Momentum</div>
<div class="t" style="left:1535.3px;top:610.41px;font-size:13px;color:#2a2a2a;transform-origin:0 0;transform:scaleX(0.975)">2025-12-02, 2:33 a.m.</div>
<div class="a" style="left:1873px;top:607px;width:20px;height:20px;border:1px solid #747474;border-radius:4px;background:#fff"></div>
<svg style="left:1879px;top:615px" width="8" height="6" viewBox="0 0 8 6"><path d="M0 0 H8 L4 6 Z" fill="#747474"/></svg>
<div class="a" style="left:203px;top:662px;width:1705px;height:1px;background:#c9c9c9"></div>
<div class="t" style="left:212px;top:641.14px;font-size:13px;color:#14579a;transform-origin:0 0;transform:scaleX(0.9859)">Relief Request Approved</div>
<div class="t" style="left:873.7px;top:641.14px;font-size:13px;color:#14579a;transform-origin:0 0;transform:scaleX(0.955)">Public Email Templates</div>
<div class="t" style="left:1204.5px;top:641.14px;font-size:13px;color:#14579a;transform-origin:0 0;transform:scaleX(0.99)">Saiful Momentum</div>
<div class="t" style="left:1535.3px;top:641.14px;font-size:13px;color:#2a2a2a;transform-origin:0 0;transform:scaleX(0.975)">2025-12-02, 5:01 a.m.</div>
<div class="a" style="left:1873px;top:638px;width:20px;height:20px;border:1px solid #747474;border-radius:4px;background:#fff"></div>
<svg style="left:1879px;top:646px" width="8" height="6" viewBox="0 0 8 6"><path d="M0 0 H8 L4 6 Z" fill="#747474"/></svg>
<div class="a" style="left:203px;top:692px;width:1705px;height:1px;background:#c9c9c9"></div>
<div class="t" style="left:212px;top:671.87px;font-size:13px;color:#14579a;transform-origin:0 0;transform:scaleX(1.0138)">Profile Update Confirmation - Approve</div>
<div class="t" style="left:873.7px;top:671.87px;font-size:13px;color:#14579a;transform-origin:0 0;transform:scaleX(0.955)">Public Email Templates</div>
<div class="t" style="left:1204.5px;top:671.87px;font-size:13px;color:#14579a;transform-origin:0 0;transform:scaleX(0.99)">Saiful Momentum</div>
<div class="t" style="left:1535.3px;top:671.87px;font-size:13px;color:#2a2a2a;transform-origin:0 0;transform:scaleX(0.975)">2025-12-02, 2:26 a.m.</div>
<div class="a" style="left:1873px;top:669px;width:20px;height:20px;border:1px solid #747474;border-radius:4px;background:#fff"></div>
<svg style="left:1879px;top:677px" width="8" height="6" viewBox="0 0 8 6"><path d="M0 0 H8 L4 6 Z" fill="#747474"/></svg>
<div class="a" style="left:203px;top:723px;width:1705px;height:1px;background:#c9c9c9"></div>
<div class="t" style="left:212px;top:702.60px;font-size:13px;color:#14579a;transform-origin:0 0;transform:scaleX(0.9580)">Relief Request Expired</div>
<div class="t" style="left:873.7px;top:702.60px;font-size:13px;color:#14579a;transform-origin:0 0;transform:scaleX(0.955)">Public Email Templates</div>
<div class="t" style="left:1204.5px;top:702.60px;font-size:13px;color:#14579a;transform-origin:0 0;transform:scaleX(0.99)">Saiful Momentum</div>
<div class="t" style="left:1535.3px;top:702.60px;font-size:13px;color:#2a2a2a;transform-origin:0 0;transform:scaleX(0.975)">2025-12-02, 5:02 a.m.</div>
<div class="a" style="left:1873px;top:700px;width:20px;height:20px;border:1px solid #747474;border-radius:4px;background:#fff"></div>
<svg style="left:1879px;top:708px" width="8" height="6" viewBox="0 0 8 6"><path d="M0 0 H8 L4 6 Z" fill="#747474"/></svg>
<div class="a" style="left:203px;top:754px;width:1705px;height:1px;background:#c9c9c9"></div>
<div class="t" style="left:212px;top:733.33px;font-size:13px;color:#14579a;transform-origin:0 0;transform:scaleX(0.9496)">Relief Request Rejected</div>
<div class="t" style="left:873.7px;top:733.33px;font-size:13px;color:#14579a;transform-origin:0 0;transform:scaleX(0.955)">Public Email Templates</div>
<div class="t" style="left:1204.5px;top:733.33px;font-size:13px;color:#14579a;transform-origin:0 0;transform:scaleX(0.99)">Saiful Momentum</div>
<div class="t" style="left:1535.3px;top:733.33px;font-size:13px;color:#2a2a2a;transform-origin:0 0;transform:scaleX(0.975)">2025-12-02, 5:02 a.m.</div>
<div class="a" style="left:1873px;top:730px;width:20px;height:20px;border:1px solid #747474;border-radius:4px;background:#fff"></div>
<svg style="left:1879px;top:738px" width="8" height="6" viewBox="0 0 8 6"><path d="M0 0 H8 L4 6 Z" fill="#747474"/></svg>
<div class="a" style="left:203px;top:784px;width:1705px;height:1px;background:#c9c9c9"></div>
<div class="t" style="left:212px;top:764.06px;font-size:13px;color:#14579a;transform-origin:0 0;transform:scaleX(0.9504)">Relief Request Received</div>
<div class="t" style="left:873.7px;top:764.06px;font-size:13px;color:#14579a;transform-origin:0 0;transform:scaleX(0.955)">Public Email Templates</div>
<div class="t" style="left:1204.5px;top:764.06px;font-size:13px;color:#14579a;transform-origin:0 0;transform:scaleX(0.99)">Saiful Momentum</div>
<div class="t" style="left:1535.3px;top:764.06px;font-size:13px;color:#2a2a2a;transform-origin:0 0;transform:scaleX(0.975)">2025-12-02, 4:59 a.m.</div>
<div class="a" style="left:1873px;top:761px;width:20px;height:20px;border:1px solid #747474;border-radius:4px;background:#fff"></div>
<svg style="left:1879px;top:769px" width="8" height="6" viewBox="0 0 8 6"><path d="M0 0 H8 L4 6 Z" fill="#747474"/></svg>
<div class="a" style="left:203px;top:815px;width:1705px;height:1px;background:#c9c9c9"></div>
<div class="t" style="left:212px;top:794.79px;font-size:13px;color:#14579a;transform-origin:0 0;transform:scaleX(0.9976)">Profile Update Confirmation - Reject</div>
<div class="t" style="left:873.7px;top:794.79px;font-size:13px;color:#14579a;transform-origin:0 0;transform:scaleX(0.955)">Public Email Templates</div>
<div class="t" style="left:1204.5px;top:794.79px;font-size:13px;color:#14579a;transform-origin:0 0;transform:scaleX(0.99)">Saiful Momentum</div>
<div class="t" style="left:1535.3px;top:794.79px;font-size:13px;color:#2a2a2a;transform-origin:0 0;transform:scaleX(0.975)">2025-12-02, 2:33 a.m.</div>
<div class="a" style="left:1873px;top:792px;width:20px;height:20px;border:1px solid #747474;border-radius:4px;background:#fff"></div>
<svg style="left:1879px;top:800px" width="8" height="6" viewBox="0 0 8 6"><path d="M0 0 H8 L4 6 Z" fill="#747474"/></svg>
<div class="a" style="left:203px;top:846px;width:1705px;height:1px;background:#c9c9c9"></div>
<div class="t" style="left:212px;top:825.52px;font-size:13px;color:#14579a;transform-origin:0 0;transform:scaleX(1.0073)">Non Member Payment Confirmation</div>
<div class="t" style="left:873.7px;top:825.52px;font-size:13px;color:#14579a;transform-origin:0 0;transform:scaleX(0.955)">Public Email Templates</div>
<div class="t" style="left:1204.5px;top:825.52px;font-size:13px;color:#14579a;transform-origin:0 0;transform:scaleX(0.99)">Saiful Momentum</div>
<div class="t" style="left:1535.3px;top:825.52px;font-size:13px;color:#2a2a2a;transform-origin:0 0;transform:scaleX(0.975)">2025-12-02, 2:34 a.m.</div>
<div class="a" style="left:1873px;top:822px;width:20px;height:20px;border:1px solid #747474;border-radius:4px;background:#fff"></div>
<svg style="left:1879px;top:830px" width="8" height="6" viewBox="0 0 8 6"><path d="M0 0 H8 L4 6 Z" fill="#747474"/></svg>
<div class="a" style="left:203px;top:877px;width:1705px;height:1px;background:#c9c9c9"></div>
<div class="t" style="left:212px;top:856.25px;font-size:13px;color:#14579a;transform-origin:0 0;transform:scaleX(1.0180)">Notify on economic relief approval</div>
<div class="t" style="left:873.7px;top:856.25px;font-size:13px;color:#14579a;transform-origin:0 0;transform:scaleX(0.955)">Public Email Templates</div>
<div class="t" style="left:1204.5px;top:856.25px;font-size:13px;color:#14579a;transform-origin:0 0;transform:scaleX(0.99)">Saiful Momentum</div>
<div class="t" style="left:1535.3px;top:856.25px;font-size:13px;color:#2a2a2a;transform-origin:0 0;transform:scaleX(0.975)">2025-11-05, 5:17 a.m.</div>
<div class="a" style="left:1873px;top:853px;width:20px;height:20px;border:1px solid #747474;border-radius:4px;background:#fff"></div>
<svg style="left:1879px;top:861px" width="8" height="6" viewBox="0 0 8 6"><path d="M0 0 H8 L4 6 Z" fill="#747474"/></svg>
<!-- horizontal scrollbar -->
<div class="a" style="left:203px;top:1017px;width:1705px;height:15px;background:#fcfcfc"></div>
<svg style="left:207px;top:1020px" width="8" height="9" viewBox="0 0 8 9"><path d="M8 0 V9 L0 4.5 Z" fill="#8a8a8a"/></svg>
<svg style="left:1896px;top:1020px" width="8" height="9" viewBox="0 0 8 9"><path d="M0 0 V9 L8 4.5 Z" fill="#8a8a8a"/></svg>

<!-- ============ TASKBAR ============ -->
<div class="a" style="left:0;top:1032px;width:1920px;height:48px;background:#1e1e1e;border-top:1px solid #2a2a2a"></div>
<svg style="left:20px;top:1044px" width="24" height="22" viewBox="0 0 24 22"><defs><linearGradient id="sun" x1="0" y1="0" x2="0" y2="1"><stop offset="0" stop-color="#fbc02d"/><stop offset="1" stop-color="#f57c00"/></linearGradient></defs><circle cx="10.5" cy="10.5" r="10.2" fill="url(#sun)"/><path d="M9 18 Q8 13.5 12.5 13.5 Q14 10 17.5 11.2 Q21.5 11.5 21.5 15 Q23.5 16 22.5 18 Z" fill="#b9d3ee"/></svg>
<div class="t" style="left:50px;top:1043px;font-size:11.2px;color:#fff;font-weight:bold;letter-spacing:-0.2px;transform-origin:0 0;transform:scaleX(1.0435)">79°F</div>
<div class="t" style="left:50px;top:1058px;font-size:12.3px;color:#d6d6d6;transform-origin:0 0;transform:scaleX(1.0099)">Mostly sunny</div>
<!-- start -->
<svg style="left:485px;top:1045px" width="23" height="23" viewBox="0 0 23 23"><defs><linearGradient id="win" x1="0" y1="0" x2="1" y2="1"><stop offset="0" stop-color="#6fd7ff"/><stop offset="1" stop-color="#1a9ce8"/></linearGradient></defs><g fill="url(#win)"><rect x="0" y="0" width="11" height="11" rx="1"/><rect x="12" y="0" width="11" height="11" rx="1"/><rect x="0" y="12" width="11" height="11" rx="1"/><rect x="12" y="12" width="11" height="11" rx="1"/></g></svg>
<!-- search -->
<div class="a" style="left:522px;top:1040px;width:219px;height:32px;border-radius:16px;background:#2c2c2c;border:1px solid #383838"></div>
<svg style="left:532px;top:1049px" width="16" height="16" viewBox="0 0 16 16"><circle cx="6.5" cy="6.5" r="5.3" fill="none" stroke="#e0e0e0" stroke-width="1.6"/><path d="M10.3 10.3 L15 15" stroke="#e0e0e0" stroke-width="1.7"/></svg>
<div class="t" style="left:558px;top:1049px;font-size:14.6px;color:#d8d8d8;transform-origin:0 0;transform:scaleX(0.9273)">Search</div>
<div class="a" style="left:688px;top:1042px;width:51px;height:28px;border-radius:0 14px 14px 0;background:linear-gradient(90deg,#c8914e,#5a4a8c 30%,#3b3f7a 70%,#b98a4e)"></div>
<svg style="left:700px;top:1042px" width="26" height="28" viewBox="0 0 26 28"><path d="M13 2 L21 24 H5 Z" fill="#1e7a4e"/><circle cx="13" cy="3" r="2" fill="#f6d56a"/><circle cx="10" cy="12" r="1.2" fill="#f6d56a"/><circle cx="16" cy="17" r="1.2" fill="#e85a5a"/><circle cx="9" cy="20" r="1.2" fill="#5ab0f6"/><rect x="11" y="24" width="4" height="3" fill="#7a4a2a"/></svg>
<!-- task view -->
<svg style="left:753px;top:1045px" width="24" height="22" viewBox="0 0 24 22"><rect x="0" y="7" width="17" height="15" rx="1.5" fill="#6a6a6a"/><rect x="6" y="0" width="18" height="16" rx="1.5" fill="#efefef"/><rect x="6" y="7" width="11" height="9" fill="#b8b8b8"/></svg>
<!-- meet -->
<svg style="left:797px;top:1045px" width="24" height="22" viewBox="0 0 24 22"><defs><linearGradient id="meet" x1="0" y1="0" x2="1" y2="1"><stop offset="0" stop-color="#8c7fe8"/><stop offset="1" stop-color="#5b4cc4"/></linearGradient></defs><path d="M12 0.5 A11 10.5 0 1 1 5 19 L0.5 21.5 L2.5 16 A11 10.5 0 0 1 12 0.5Z" fill="url(#meet)"/><rect x="6" y="7" width="8" height="8" rx="1.5" fill="#fff"/><path d="M14 10 L18 7.5 V14.5 L14 12Z" fill="#fff"/></svg>
<!-- folder -->
<svg style="left:841px;top:1045px" width="25" height="22" viewBox="0 0 25 22"><path d="M0 1.5 Q0 0 1.5 0 H8 L10 2.5 H23.5 Q25 2.5 25 4 V6 H0Z" fill="#e8a92a"/><rect x="0" y="5" width="25" height="17" rx="1" fill="#ffd24d"/><rect x="6" y="15" width="13" height="7" rx="1.5" fill="#1a8fd9"/></svg>
<div class="a" style="left:849px;top:1072px;width:6px;height:3px;border-radius:2px;background:#9a9a9a"></div>
<!-- edge -->
<svg style="left:884px;top:1044px" width="25" height="24" viewBox="0 0 25 24"><defs><linearGradient id="edge1" x1="0" y1="1" x2="1" y2="0"><stop offset="0" stop-color="#0c59a4"/><stop offset="1" stop-color="#2fc9f5"/></linearGradient><linearGradient id="edge2" x1="0" y1="0" x2="1" y2="1"><stop offset="0" stop-color="#35c1f1"/><stop offset="1" stop-color="#66eb6e"/></linearGradient></defs><path d="M12.5 0.5 A12 12 0 0 1 24.5 12 Q24.5 15.5 20 15.5 H9 Q9 19 13.5 20.5 Q17 21.5 21 19.5 A12 12 0 0 1 0.5 12 A12 12 0 0 1 12.5 0.5Z" fill="url(#edge1)"/><path d="M12.5 0.5 A12 12 0 0 1 24.5 12 Q24.5 15.5 20 15.5 H15 Q17 12 15 9 Q12 5.5 6 7 Q3 8 0.8 10.5 A12 12 0 0 1 12.5 0.5Z" fill="url(#edge2)"/></svg>
<div class="a" style="left:894px;top:1072px;width:6px;height:3px;border-radius:2px;background:#9a9a9a"></div>
<!-- firefox -->
<svg style="left:929px;top:1044px" width="24" height="24" viewBox="0 0 24 24"><defs><linearGradient id="ff" x1="0" y1="0" x2="0" y2="1"><stop offset="0" stop-color="#ffbd2e"/><stop offset="0.5" stop-color="#ff5a2a"/><stop offset="1" stop-color="#e3175a"/></linearGradient></defs><path d="M12 2.5 A10.5 10.5 0 1 0 22.5 12 Q22.5 6 17.5 1 Q18.5 5 16.5 6 Q15 3 11 2.5 Q8 2 5 4 Q3.5 2 4.5 0.5 Q1.5 3 1.5 12" fill="url(#ff)"/><circle cx="12" cy="13" r="5.5" fill="#7a3ee0"/><path d="M7 12 Q10 8 15 9 Q12 11 13 13 Q9 13 7 12Z" fill="#ff8a3a"/></svg>
<!-- chrome x3 -->
<div class="a" style="left:1053px;top:1036px;width:36px;height:40px;border-radius:5px;background:#2e2e2e;box-shadow:2px 0 0 #262626"></div>
<svg style="left:973px;top:1045px" width="24" height="24" viewBox="0 0 24 24"><path d="M12 12 L2.1 6.3 A11.5 11.5 0 0 1 21.9 6.3 Z" fill="#e33b2e"/><path d="M12 12 L21.9 6.3 A11.5 11.5 0 0 1 12 23.5 Z" fill="#fbc116"/><path d="M12 12 L12 23.5 A11.5 11.5 0 0 1 2.1 6.3 Z" fill="#1ea446"/><circle cx="12" cy="12" r="5.3" fill="#fff"/><circle cx="12" cy="12" r="4.2" fill="#1a73e8"/></svg>
<svg style="left:986px;top:1039px" width="16" height="16" viewBox="0 0 16 16"><circle cx="8" cy="8" r="8" fill="#e8e8e8"/><circle cx="8" cy="6.5" r="3" fill="#6b4a3a"/><path d="M3 14 Q8 8 13 14" fill="#4a4a4a"/></svg>
<div class="a" style="left:982px;top:1072px;width:6px;height:3px;border-radius:2px;background:#9a9a9a"></div>
<svg style="left:1017px;top:1045px" width="24" height="24" viewBox="0 0 24 24"><path d="M12 12 L2.1 6.3 A11.5 11.5 0 0 1 21.9 6.3 Z" fill="#e33b2e"/><path d="M12 12 L21.9 6.3 A11.5 11.5 0 0 1 12 23.5 Z" fill="#fbc116"/><path d="M12 12 L12 23.5 A11.5 11.5 0 0 1 2.1 6.3 Z" fill="#1ea446"/><circle cx="12" cy="12" r="5.3" fill="#fff"/><circle cx="12" cy="12" r="4.2" fill="#1a73e8"/></svg>
<svg style="left:1030px;top:1039px" width="12" height="12" viewBox="0 0 12 12"><rect x="1" y="1" width="10" height="10" rx="2" fill="#3a3a3a" transform="rotate(15 6 6)"/></svg>
<svg style="left:1061px;top:1045px" width="24" height="24" viewBox="0 0 24 24"><path d="M12 12 L2.1 6.3 A11.5 11.5 0 0 1 21.9 6.3 Z" fill="#e33b2e"/><path d="M12 12 L21.9 6.3 A11.5 11.5 0 0 1 12 23.5 Z" fill="#fbc116"/><path d="M12 12 L12 23.5 A11.5 11.5 0 0 1 2.1 6.3 Z" fill="#1ea446"/><circle cx="12" cy="12" r="5.3" fill="#fff"/><circle cx="12" cy="12" r="4.2" fill="#1a73e8"/></svg>
<div class="a" style="left:1074px;top:1039px;width:16px;height:16px;border-radius:8px;background:#c4185a"></div>
<div class="t" style="left:1074px;top:1042px;width:16px;text-align:center;font-size:10px;color:#fff">S</div>
<div class="a" style="left:1065px;top:1072px;width:16px;height:3px;border-radius:2px;background:#4cc2ff"></div>

<!-- resource monitor -->
<svg style="left:1105px;top:1047px" width="25" height="18" viewBox="0 0 25 18"><rect x="0" y="0" width="25" height="18" fill="#dce8f3"/><path d="M1 15 L6 12 L8 4 L10 14 L13 10 L16 3 L18 13 L21 11 L24 14 V17 H1Z" fill="#6fb3e6"/><path d="M1 15 L6 12 L8 4 L10 14 L13 10 L16 3 L18 13 L21 11 L24 14" fill="none" stroke="#1a78c8" stroke-width="1"/></svg>
<!-- cmd -->
<svg style="left:1149px;top:1046px" width="23" height="20" viewBox="0 0 23 20"><rect x="0" y="0" width="23" height="20" fill="#0c0c0c" stroke="#7a7a7a" stroke-width="1"/><rect x="0.5" y="0.5" width="22" height="2.5" fill="#9a9a9a"/><path d="M3 7 H8 M3 10 L6 12 L3 14 M9 14 H18" stroke="#e8e8e8" stroke-width="1.1" fill="none"/></svg>
<!-- pgadmin -->
<svg style="left:1193px;top:1045px" width="24" height="24" viewBox="0 0 24 24"><path d="M5 2 Q12 -1 19 2 Q23 4 22.5 9 Q22 13 19 13 Q18 16 17 20 Q15.5 23.5 13 23 Q11.5 18 11 14 Q9 15 7 14 Q3 13 2 9 Q1 4 5 2Z" fill="#3d6b94" stroke="#cfdff0" stroke-width="0.9"/><path d="M7 4 Q6 9 8 12 M16 4 Q18 9 16 13" stroke="#cfdff0" stroke-width="0.9" fill="none"/></svg>
<!-- vscode -->
<svg style="left:1237px;top:1045px" width="24" height="24" viewBox="0 0 24 24"><path d="M17.5 0.5 L23.5 3 V21 L17.5 23.5 L7 13.5 L3 17 L0.5 15.5 V8.5 L3 7 L7 10.5 Z M17.5 6.5 L11 12 L17.5 17.5 Z M3 9.5 V14.5 L5.5 12 Z" fill="#1f9cf0"/></svg>
<!-- pycharm -->
<svg style="left:1281px;top:1044px" width="25" height="25" viewBox="0 0 25 25"><defs><linearGradient id="pc" x1="0" y1="0" x2="1" y2="1"><stop offset="0" stop-color="#21d789"/><stop offset="0.5" stop-color="#fcf84a"/><stop offset="1" stop-color="#07c3f2"/></linearGradient></defs><path d="M2 0 H20 L25 6 V25 H5 L0 19 V2Z" fill="url(#pc)"/><rect x="4" y="4" width="17" height="17" fill="#000"/><text x="5.5" y="12.5" font-family="Liberation Sans" font-weight="bold" font-size="7.5" fill="#fff">PC</text><rect x="5.5" y="17" width="6" height="1.3" fill="#fff"/></svg>
<!-- git -->
<svg style="left:1325px;top:1044px" width="25" height="25" viewBox="0 0 25 25"><path d="M12.5 0.5 L24.5 12.5 L12.5 24.5 L0.5 12.5Z" fill="#f1c94a"/><path d="M12.5 0.5 L18.5 6.5 L12.5 12.5 L6.5 6.5Z" fill="#e84a3a"/><path d="M0.5 12.5 L6.5 6.5 L12.5 12.5 L6.5 18.5Z" fill="#4a8ae8"/><path d="M12.5 12.5 L18.5 6.5 L24.5 12.5 L18.5 18.5Z" fill="#7ac47a"/><path d="M9 9 L16 16 M12.5 12.5 V20" stroke="#222" stroke-width="1.4"/><circle cx="16" cy="16" r="1.6" fill="#222"/><circle cx="12.5" cy="20" r="1.6" fill="#222"/></svg>
<!-- notepad -->
<svg style="left:1372px;top:1045px" width="19" height="23" viewBox="0 0 19 23"><rect x="0" y="2" width="19" height="21" rx="1.5" fill="#3aa6e8"/><rect x="0" y="0" width="19" height="4" fill="#2b7fc0"/><path d="M3 9 H16 M3 12.5 H16 M3 16 H16 M3 19.5 H12" stroke="#0d3a66" stroke-width="1.3"/></svg>
<div class="a" style="left:1378px;top:1072px;width:6px;height:3px;border-radius:2px;background:#9a9a9a"></div>
<!-- taskpro -->
<div class="a" style="left:1413px;top:1045px;width:24px;height:24px;background:#fff"></div>
<svg style="left:1417px;top:1048px" width="16" height="14" viewBox="0 0 16 14"><rect x="0.5" y="0.5" width="15" height="10" rx="1" fill="#cfe8f5" stroke="#2a7fb8" stroke-width="1"/><rect x="6" y="11" width="4" height="2" fill="#2a7fb8"/><text x="3" y="8" font-family="Liberation Sans" font-size="6" font-weight="bold" fill="#2a9a5a">QC</text></svg>
<div class="a" style="left:1422px;top:1072px;width:6px;height:3px;border-radius:2px;background:#9a9a9a"></div>
<!-- tray -->
<svg style="left:1671px;top:1052px" width="12" height="7" viewBox="0 0 12 7"><path d="M0.8 6.2 L6 1 L11.2 6.2" fill="none" stroke="#f0f0f0" stroke-width="1.5"/></svg>
<svg style="left:1700px;top:1050px" width="18" height="11" viewBox="0 0 18 11"><path d="M4 11 Q0 11 0.3 7.5 Q0.8 5 3.5 5 Q4.5 1 8.5 1 Q12 1 13 4 Q17.5 4 17.8 7.5 Q18 11 14 11Z" fill="#d8d8d8"/></svg>
<svg style="left:1733px;top:1050px" width="17" height="12" viewBox="0 0 17 12"><rect x="0.7" y="0.7" width="15.6" height="10.6" rx="1.5" fill="none" stroke="#f0f0f0" stroke-width="1.3"/><path d="M3 4 H14 M3 6.3 H14 M5 8.6 H12" stroke="#f0f0f0" stroke-width="1.1" stroke-dasharray="1.2 0.9"/></svg>
<svg style="left:1765px;top:1049px" width="17" height="13" viewBox="0 0 17 13"><path d="M1 4.5 A11 11 0 0 1 16 4.5 M3.5 7 A7.5 7.5 0 0 1 13.5 7 M6 9.5 A3.8 3.8 0 0 1 11 9.5" fill="none" stroke="#f0f0f0" stroke-width="1.5"/><circle cx="8.5" cy="11.7" r="1.2" fill="#f0f0f0"/></svg>
<svg style="left:1789px;top:1049px" width="17" height="13" viewBox="0 0 17 13"><path d="M1 4.5 H4 L8 1 V12 L4 8.5 H1Z" fill="none" stroke="#f0f0f0" stroke-width="1.2"/><path d="M10.5 4 Q12 6.5 10.5 9 M12.5 2.5 Q15 6.5 12.5 10.5 M14.5 1 Q18 6.5 14.5 12" fill="none" stroke="#f0f0f0" stroke-width="1.2"/></svg>
<div class="t" style="left:1833.5px;top:1042.5px;font-size:12.3px;color:#f5f5f5;transform-origin:0 0;transform:scaleX(0.9727)">2:23 PM</div>
<div class="t" style="left:1821.5px;top:1059px;font-size:12.4px;color:#f5f5f5;transform-origin:0 0;transform:scaleX(1.0185)">12/3/2025</div>
<svg style="left:1885px;top:1049px" width="15" height="15" viewBox="0 0 15 15"><path d="M7.5 1 Q12.2 1 12.2 6 V9.5 L14 12 H1 L2.8 9.5 V6 Q2.8 1 7.5 1Z M5.5 13 Q7.5 15.5 9.5 13" fill="none" stroke="#f0f0f0" stroke-width="1.2"/></svg>
</body></html>
